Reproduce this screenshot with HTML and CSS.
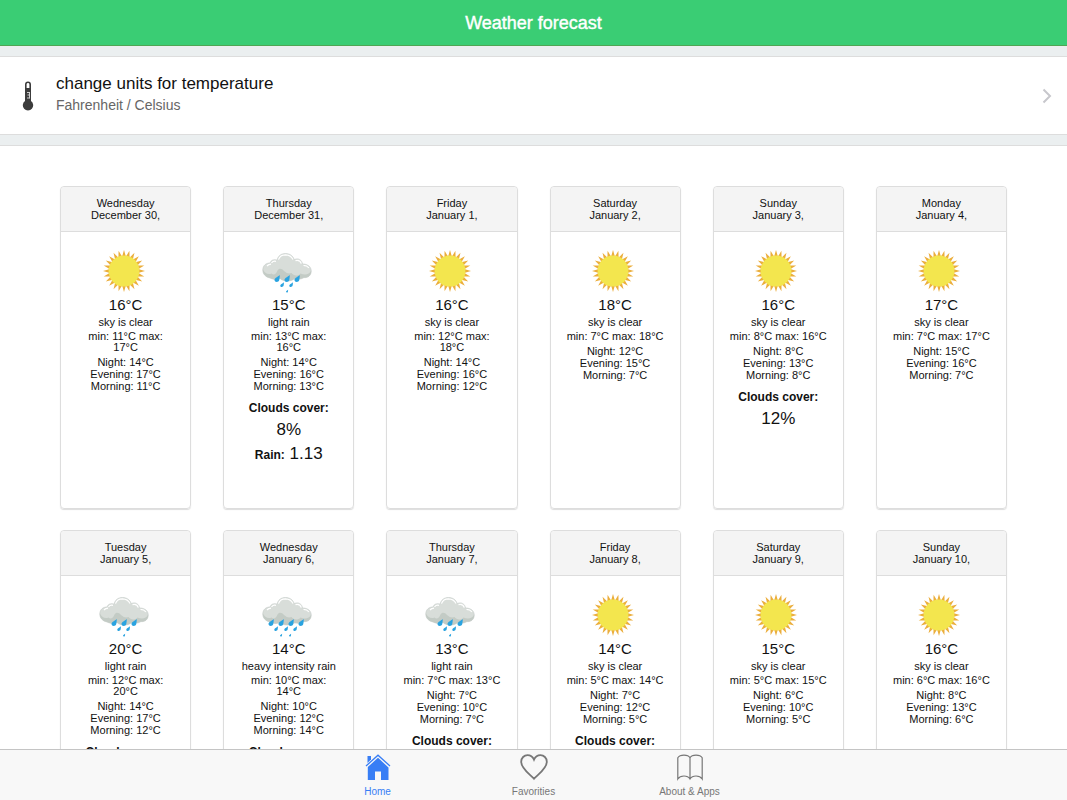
FILE: index.html
```html
<!DOCTYPE html>
<html lang="en">
<head>
    <meta charset="UTF-8">
    <meta name="viewport" content="width=device-width, initial-scale=1.0">
    <title>Weather forecast</title>
    <link rel="stylesheet" href="styles.css">
</head>
<body>
    <!-- shared weather icons -->
    <svg class="defs" aria-hidden="true">
        <defs>
            <path id="ray" d="M25 4 L27 11 H23 Z"/>
            <g id="rays">
                <use href="#ray"/>
                <use href="#ray" transform="rotate(15 25 25)"/>
                <use href="#ray" transform="rotate(30 25 25)"/>
                <use href="#ray" transform="rotate(45 25 25)"/>
                <use href="#ray" transform="rotate(60 25 25)"/>
                <use href="#ray" transform="rotate(75 25 25)"/>
            </g>
            <path id="drop" d="M2.800 -.5 C2.700 2 2.500 3.500 2.200 4.800 C1.600 7 -2.500 7 -2.500 4.500 C-2.500 2.400 .6 1.600 2.800 -.5 Z"/>
            <symbol id="sun" viewBox="0 0 50 50">
                <g fill="#ebae3c">
                    <use href="#rays"/>
                    <use href="#rays" transform="rotate(90 25 25)"/>
                    <use href="#rays" transform="rotate(180 25 25)"/>
                    <use href="#rays" transform="rotate(270 25 25)"/>
                </g>
                <circle cx="25" cy="25" r="15.400" fill="#f3e64e"/>
            </symbol>
            <symbol id="cloud" viewBox="0 0 50 50">
                <path d="M8 32 C3.500 31 .8 28 .8 24 C.8 19.500 4 17 8 17 C9 14 12 13 15 14.200 C16 10 19 7.500 23.500 7.500 C28 7.500 31 10 32.300 13.600 C36.500 11.600 40 14 40.500 18 C45.500 18 49.200 20.500 49.200 25 C49.200 29.500 46 32 42 31.600 C38 34 35 33 32 33 C28 36 21 35.500 18 32.500 C14 34 11 33.500 8 32 Z" fill="#d8ddd9" stroke="#c5cbc7" stroke-width=".6"/>
                <path d="M8 32 C3.500 31 .8 28 .8 23.500 C2.500 27 6 29 9.500 27.500 C11.500 29.500 14 28.500 15.500 24.500 C17 22 20 22.500 22 25 C25 27.500 27 28 29.500 27 C31.500 30 36 30.500 38.500 27.500 C43 29.500 47.500 28.500 49.200 24.500 C49.500 29 46 32 42 31.600 C38 34 35 33 32 33 C28 36 21 35.500 18 32.500 C14 34 11 33.500 8 32 Z" fill="#c3cbc5"/>
                <path d="M5 20 Q6.500 18.200 9 18.200 M9.500 16.800 Q11.500 14.500 14 15.400 M16.500 13.600 Q18 8.900 23.500 8.900 Q29 9.100 31 13.600 M33.500 14.600 Q38 13.400 39.300 17.600 M41.500 19.400 Q45 19.400 47 22" fill="none" stroke="#fff" stroke-width="1.200"/>
            </symbol>
            <symbol id="light-rain" viewBox="0 0 50 50">
                <use href="#cloud"/>
                <g fill="#2aa3e0">
                    <use href="#drop" x="15" y="29.500"/>
                    <use href="#drop" x="25" y="29.500"/>
                    <use href="#drop" x="35" y="29.500"/>
                    <use href="#drop" transform="translate(20 36.500) scale(.7)"/>
                    <use href="#drop" transform="translate(29 36.500) scale(.7)"/>
                    <use href="#drop" transform="translate(25 44) scale(.4)"/>
                </g>
            </symbol>
            <symbol id="heavy-rain" viewBox="0 0 50 50">
                <use href="#cloud"/>
                <g fill="#2aa3e0">
                    <use href="#drop" x="9" y="29.500"/>
                    <use href="#drop" x="19" y="29.500"/>
                    <use href="#drop" x="29" y="29.500"/>
                    <use href="#drop" x="39" y="29.500"/>
                    <use href="#drop" transform="translate(14 36.500) scale(.7)"/>
                    <use href="#drop" transform="translate(24 36.500) scale(.7)"/>
                    <use href="#drop" transform="translate(33 36.500) scale(.7)"/>
                    <use href="#drop" transform="translate(19 44) scale(.4)"/>
                    <use href="#drop" transform="translate(28 44) scale(.4)"/>
                </g>
            </symbol>
        </defs>
    </svg>

    <header class="bar">
        <h1>Weather forecast</h1>
    </header>

    <main>
        <div class="list">
            <a class="item" href="#units">
                <svg class="thermo" viewBox="0 0 12 32">
                    <path d="M3 4.500 a3 3 0 0 1 6 0 V21 a5.200 5.200 0 1 1 -6 0 Z" fill="#3c3c3c"/>
                    <path d="M4.600 8 V4.500 a1.400 1.400 0 0 1 2.800 0 V8 Z" fill="#fff"/>
                    <path d="M7.500 12.500 H5 M7.500 12 V18.500 M7.500 15 H5.500 M7.500 18 H5" fill="none" stroke="#ddd" stroke-width=".9"/>
                </svg>
                <div class="item-text">
                    <h2>change units for temperature</h2>
                    <p>Fahrenheit / Celsius</p>
                </div>
                <svg class="arrow" viewBox="0 0 10 16"><path d="M1.500 1.500 L8 8 L1.500 14.500" fill="none" stroke="#c7c7cc" stroke-width="2"/></svg>
            </a>
        </div>

        <div class="days">
            <section class="card">
                <div class="card-head">Wednesday<br>December 30,</div>
                <div class="card-body">
                    <svg class="icon"><use href="#sun"/></svg>
                    <p class="temp">16°C</p>
                    <p class="desc">sky is clear</p>
                    <p class="range">min: 11°C max: 17°C</p>
                    <p class="parts">Night: 14°C<br>Evening: 17°C<br>Morning: 11°C</p>
                </div>
            </section>
            <section class="card">
                <div class="card-head">Thursday<br>December 31,</div>
                <div class="card-body">
                    <svg class="icon"><use href="#light-rain"/></svg>
                    <p class="temp">15°C</p>
                    <p class="desc">light rain</p>
                    <p class="range">min: 13°C max: 16°C</p>
                    <p class="parts">Night: 14°C<br>Evening: 16°C<br>Morning: 13°C</p>
                    <p class="extra"><b>Clouds cover:</b><br>8%</p>
                    <p class="extra"><b>Rain:</b> 1.13</p>
                </div>
            </section>
            <section class="card">
                <div class="card-head">Friday<br>January 1,</div>
                <div class="card-body">
                    <svg class="icon"><use href="#sun"/></svg>
                    <p class="temp">16°C</p>
                    <p class="desc">sky is clear</p>
                    <p class="range">min: 12°C max: 18°C</p>
                    <p class="parts">Night: 14°C<br>Evening: 16°C<br>Morning: 12°C</p>
                </div>
            </section>
            <section class="card">
                <div class="card-head">Saturday<br>January 2,</div>
                <div class="card-body">
                    <svg class="icon"><use href="#sun"/></svg>
                    <p class="temp">18°C</p>
                    <p class="desc">sky is clear</p>
                    <p class="range">min: 7°C max: 18°C</p>
                    <p class="parts">Night: 12°C<br>Evening: 15°C<br>Morning: 7°C</p>
                </div>
            </section>
            <section class="card">
                <div class="card-head">Sunday<br>January 3,</div>
                <div class="card-body">
                    <svg class="icon"><use href="#sun"/></svg>
                    <p class="temp">16°C</p>
                    <p class="desc">sky is clear</p>
                    <p class="range">min: 8°C max: 16°C</p>
                    <p class="parts">Night: 8°C<br>Evening: 13°C<br>Morning: 8°C</p>
                    <p class="extra"><b>Clouds cover:</b><br>12%</p>
                </div>
            </section>
            <section class="card">
                <div class="card-head">Monday<br>January 4,</div>
                <div class="card-body">
                    <svg class="icon"><use href="#sun"/></svg>
                    <p class="temp">17°C</p>
                    <p class="desc">sky is clear</p>
                    <p class="range">min: 7°C max: 17°C</p>
                    <p class="parts">Night: 15°C<br>Evening: 16°C<br>Morning: 7°C</p>
                </div>
            </section>
            <section class="card">
                <div class="card-head">Tuesday<br>January 5,</div>
                <div class="card-body">
                    <svg class="icon"><use href="#light-rain"/></svg>
                    <p class="temp">20°C</p>
                    <p class="desc">light rain</p>
                    <p class="range">min: 12°C max: 20°C</p>
                    <p class="parts">Night: 14°C<br>Evening: 17°C<br>Morning: 12°C</p>
                    <p class="extra"><b>Clouds cover:</b></p>
                </div>
            </section>
            <section class="card">
                <div class="card-head">Wednesday<br>January 6,</div>
                <div class="card-body">
                    <svg class="icon"><use href="#heavy-rain"/></svg>
                    <p class="temp">14°C</p>
                    <p class="desc">heavy intensity rain</p>
                    <p class="range">min: 10°C max: 14°C</p>
                    <p class="parts">Night: 10°C<br>Evening: 12°C<br>Morning: 14°C</p>
                    <p class="extra"><b>Clouds cover:</b></p>
                </div>
            </section>
            <section class="card">
                <div class="card-head">Thursday<br>January 7,</div>
                <div class="card-body">
                    <svg class="icon"><use href="#light-rain"/></svg>
                    <p class="temp">13°C</p>
                    <p class="desc">light rain</p>
                    <p class="range">min: 7°C max: 13°C</p>
                    <p class="parts">Night: 7°C<br>Evening: 10°C<br>Morning: 7°C</p>
                    <p class="extra"><b>Clouds cover:</b></p>
                </div>
            </section>
            <section class="card">
                <div class="card-head">Friday<br>January 8,</div>
                <div class="card-body">
                    <svg class="icon"><use href="#sun"/></svg>
                    <p class="temp">14°C</p>
                    <p class="desc">sky is clear</p>
                    <p class="range">min: 5°C max: 14°C</p>
                    <p class="parts">Night: 7°C<br>Evening: 12°C<br>Morning: 5°C</p>
                    <p class="extra"><b>Clouds cover:</b></p>
                </div>
            </section>
            <section class="card">
                <div class="card-head">Saturday<br>January 9,</div>
                <div class="card-body">
                    <svg class="icon"><use href="#sun"/></svg>
                    <p class="temp">15°C</p>
                    <p class="desc">sky is clear</p>
                    <p class="range">min: 5°C max: 15°C</p>
                    <p class="parts">Night: 6°C<br>Evening: 10°C<br>Morning: 5°C</p>
                </div>
            </section>
            <section class="card">
                <div class="card-head">Sunday<br>January 10,</div>
                <div class="card-body">
                    <svg class="icon"><use href="#sun"/></svg>
                    <p class="temp">16°C</p>
                    <p class="desc">sky is clear</p>
                    <p class="range">min: 6°C max: 16°C</p>
                    <p class="parts">Night: 8°C<br>Evening: 13°C<br>Morning: 6°C</p>
                </div>
            </section>
        </div>
    </main>

    <nav class="tabs">
        <a class="tab active" href="#home">
            <svg viewBox="0 0 28 28">
                <path d="M3.500 3 H7 V6.500 L3.500 10 Z" fill="currentColor"/>
                <path d="M2 13 L14 2.200 L26 13" fill="none" stroke="currentColor" stroke-width="1.300"/>
                <path d="M3.800 14 L14 4.800 L24.500 14.500 V27 H17 V18.500 H11 V27 H3.800 Z" fill="currentColor"/>
            </svg>
            <span>Home</span>
        </a>
        <a class="tab" href="#favorities">
            <svg viewBox="0 0 28 28"><path d="M14 25.800 C10.500 21.500 1.200 16 1.200 8.800 C1.200 4.800 4.200 2.200 7.500 2.200 C10.500 2.200 12.800 4 14 6.700 C15.200 4 17.500 2.200 20.500 2.200 C23.800 2.200 26.800 4.800 26.800 8.800 C26.800 16 17.500 21.500 14 25.800 Z" fill="none" stroke="currentColor" stroke-width="1.800"/></svg>
            <span>Favorities</span>
        </a>
        <a class="tab" href="#about">
            <svg viewBox="0 0 28 28"><path d="M14 4.800 C12 1.200 4 1.200 1.800 4.800 V26 C4.500 22 11.500 22 14 26 C16.500 22 23.500 22 26.200 26 V4.800 C24 1.200 16 1.200 14 4.800 Z M14 4.800 V26" fill="none" stroke="currentColor" stroke-width="1.200"/></svg>
            <span>About &amp; Apps</span>
        </a>
    </nav>
</body>
</html>
```

FILE: styles.css
```css
* {
    box-sizing: border-box;
}

body {
    margin: 0;
    height: 100vh;
    display: flex;
    flex-direction: column;
    overflow: hidden;
    background-color: #fff;
    color: #111;
    font-family: "Liberation Sans", Arial, sans-serif;
}

h1, h2, p {
    margin: 0;
    font-weight: normal;
}

.defs {
    position: absolute;
    width: 0;
    height: 0;
}

.bar {
    flex: none;
    padding-top: 2px;
    background-color: #3acd74;
    border-bottom: 1px solid #4fa653;
    color: #fff;
    text-align: center;
}

.bar h1 {
    font-size: 18px;
    line-height: 43px;
    -webkit-text-stroke: 0.4px #fff;
}

main {
    flex: 1;
    min-height: 0;
    overflow-y: auto;
    scrollbar-width: none;
}

.list {
    padding: 10px 0;
    background-color: #ebeff0;
    border-bottom: 1px solid #ddd;
}

.item {
    display: flex;
    align-items: center;
    height: 79px;
    padding: 0 15px 0 22px;
    background-color: #fff;
    border-top: 1px solid #ddd;
    border-bottom: 1px solid #ddd;
    color: #111;
    text-decoration: none;
}

.thermo {
    width: 12px;
    height: 32px;
    margin-right: 22px;
}

.item-text {
    flex: 1;
    padding-bottom: 4px;
}

.item h2 {
    font-size: 17px;
    line-height: 22px;
}

.item p {
    font-size: 14px;
    line-height: 20px;
    color: #666;
}

.arrow {
    width: 10px;
    height: 16px;
}

.days {
    display: grid;
    grid-template-columns: repeat(6, 1fr);
    gap: 21px 32px;
    padding: 40px 60px;
}

.card {
    height: 323px;
    border: 1px solid #ddd;
    border-radius: 4px;
    box-shadow: 0 1px 1px #ddd;
    font-size: 11px;
    line-height: 12px;
    text-align: center;
}

.card-head {
    padding: 10px 0;
    background-color: #f4f4f4;
    border-bottom: 1px solid #ddd;
    border-radius: 4px 4px 0 0;
}

.card-body {
    padding: 14px 15px;
}

.icon {
    width: 50px;
    height: 50px;
    margin-right: 4px;
    vertical-align: top;
}

.temp {
    font-size: 15px;
    line-height: 18px;
}

.desc {
    line-height: 17px;
}

.range {
    line-height: 11px;
    margin-bottom: 3px;
}

.extra {
    margin-top: 4px;
    font-size: 17px;
    line-height: 22px;
}

.extra + .extra {
    margin-top: 2px;
}

.extra b {
    font-size: 12px;
}

.tabs {
    flex: none;
    display: flex;
    justify-content: center;
    height: 51px;
    background-color: #f8f8f8;
    border-top: 1px solid #c4c4c4;
}

.tab {
    width: 156px;
    padding-top: 3px;
    display: flex;
    flex-direction: column;
    align-items: center;
    color: #777;
    font-size: 10px;
    line-height: 14px;
    text-decoration: none;
}

.tab svg {
    width: 28px;
    height: 28px;
    margin-bottom: 4px;
}

.tab.active {
    color: #387ef5;
}
```
